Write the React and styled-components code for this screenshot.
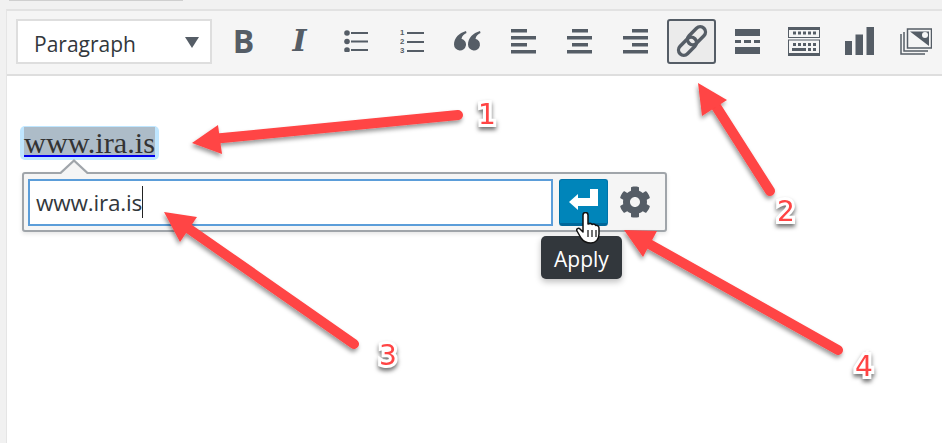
import styled, { createGlobalStyle } from 'styled-components'
import { FaCog } from 'react-icons/fa'

const GlobalStyle = createGlobalStyle`
  html, body {
    margin: 0;
    padding: 0;
    background: #f1f1f1;
    overflow: hidden;
  }
`

const Page = styled.div`
  position: relative;
  box-sizing: border-box;
  width: 942px;
  height: 443px;
  overflow: hidden;
  padding-left: 6px;
  background: #f1f1f1;
  font-family: "Open Sans", sans-serif;
`

const TabEdge = styled.div`
  width: 174px;
  height: 1px;
  margin: 0 0 8px 3px;
  background: #cfcfcf;
`

const Editor = styled.div`
  height: 434px;
  border-left: 1px solid #e5e5e5;
  border-top: 2px solid #e2e2e2;
  background: #fff;
`

const Toolbar = styled.div`
  box-sizing: border-box;
  height: 65px;
  display: flex;
  align-items: center;
  gap: 7px;
  padding: 0 0 3px 9px;
  background: #f5f5f5;
  border-bottom: 2px solid #dedede;
`

const FormatSelect = styled.div`
  box-sizing: border-box;
  width: 196px;
  height: 45px;
  display: flex;
  align-items: center;
  justify-content: space-between;
  padding: 0 11px 0 16px;
  background: #fff;
  border: 2px solid #dedede;
  color: #32373c;
  font-size: 21px;
`

const FormatLabel = styled.span`
  padding-top: 5px;
`

const Caret = styled.span`
  margin-top: 3px;
  width: 0;
  height: 0;
  border-left: 7px solid transparent;
  border-right: 7px solid transparent;
  border-top: 11px solid #555d66;
`

const ToolButton = styled.div`
  box-sizing: border-box;
  flex: none;
  width: 49px;
  height: 45px;
  display: flex;
  align-items: center;
  justify-content: center;
  border-radius: 3px;
  color: #555d66;
  border: 2px solid ${p => (p.$active ? '#555d66' : 'transparent')};
  background: ${p => (p.$active ? '#ebebeb' : 'transparent')};
`

const BoldGlyph = styled.span`
  font-family: "Open Sans", sans-serif;
  font-weight: 700;
  font-size: 32px;
  line-height: 1;
`

const ItalicGlyph = styled.span`
  font-family: "DejaVu Serif", serif;
  font-weight: 700;
  font-style: italic;
  font-size: 30px;
  line-height: 1;
`

const Content = styled.div`
  padding: 50px 0 0 13px;
`

const SelectionBox = styled.span`
  display: inline-block;
  padding: 1px 4px 3px;
  border-radius: 5px;
  background: #bfe6ff;
`

const LinkText = styled.span`
  display: block;
  height: 28px;
  line-height: 32px;
  background: #adbcc8;
  border-bottom: 2px solid #0000ee;
  color: #333;
  font-family: "Liberation Serif", serif;
  font-size: 30.3px;
`

const LinkPopup = styled.div`
  position: absolute;
  left: 22px;
  top: 172px;
  box-sizing: border-box;
  width: 645px;
  height: 60px;
  display: flex;
  align-items: center;
  gap: 6px;
  padding: 0 4px;
  background: #f5f5f5;
  border: 2px solid #a0a5aa;
  border-radius: 3px;
  box-shadow: 0 2px 4px rgba(0, 0, 0, 0.1);

  &::before,
  &::after {
    content: '';
    position: absolute;
    width: 0;
    height: 0;
    border-left: 14px solid transparent;
    border-right: 14px solid transparent;
    border-bottom: 13px solid #a0a5aa;
    left: 36px;
    top: -15px;
  }

  &::after {
    border-bottom-color: #f5f5f5;
    top: -12px;
  }
`

const UrlField = styled.div`
  box-sizing: border-box;
  width: 525px;
  height: 47px;
  display: flex;
  align-items: center;
  padding-left: 6px;
  background: #fff;
  border: 2px solid #5b9dd9;
  color: #32373c;
  font-size: 22.5px;
  letter-spacing: -0.2px;
`

const TextCaret = styled.span`
  width: 1px;
  height: 32px;
  background: #222;
`

const ApplyButton = styled.div`
  box-sizing: border-box;
  width: 49px;
  height: 47px;
  display: flex;
  align-items: center;
  justify-content: center;
  padding-bottom: 2px;
  background: #0085ba;
  border: 1px solid #0073aa;
  border-bottom: 3px solid #006799;
  border-radius: 3px;
`

const GearButton = styled.div`
  flex: 1;
  display: flex;
  justify-content: center;
  padding-right: 5px;
  color: #555d66;
  font-size: 32px;
  line-height: 0;
`

const Tooltip = styled.div`
  position: absolute;
  left: 541px;
  top: 236px;
  box-sizing: border-box;
  width: 81px;
  height: 43px;
  padding-top: 3px;
  display: flex;
  align-items: center;
  justify-content: center;
  background: #32373c;
  border-radius: 5px;
  box-shadow: 0 3px 6px rgba(0, 0, 0, 0.25);
  color: #fff;
  font-size: 21px;
`

const HandCursor = styled.svg`
  position: absolute;
  left: 576px;
  top: 212px;
`

const Overlay = styled.svg`
  position: absolute;
  left: 0;
  top: 0;
  pointer-events: none;
`

const Callout = styled.span`
  position: absolute;
  left: ${p => p.$x}px;
  top: ${p => p.$y}px;
  width: 30px;
  margin-left: -15px;
  text-align: center;
  color: #ff4444;
  font-family: "DejaVu Sans", sans-serif;
  font-size: 28px;
  line-height: 40px;
  -webkit-text-stroke: 6px #fff;
  paint-order: stroke fill;
  filter: drop-shadow(0 3px 2px rgba(0, 0, 0, 0.55));
`

const arrows = [
  { head: '192,143 218,125 222,154', from: [458, 115], to: [212, 139] },
  { head: '698,83 727,100 702,116', from: [770, 191], to: [712, 100] },
  { head: '164,212 197,217 180,242', from: [354, 344], to: [182, 224] },
  { head: '624,230 657,231 643,257', from: [838, 350], to: [642, 240] },
]

const callouts = [
  { label: '1', x: 487, y: 95 },
  { label: '2', x: 786, y: 192 },
  { label: '3', x: 388, y: 336 },
  { label: '4', x: 864, y: 347 },
]

function Icon({ w, h, children }) {
  return (
    <svg width={w} height={h} viewBox={`0 0 ${w} ${h}`} fill="currentColor">
      {children}
    </svg>
  )
}

function ListIcon() {
  return (
    <Icon w={24} h={22}>
      <circle cx="3" cy="3" r="2.8" />
      <circle cx="3" cy="11.5" r="2.8" />
      <circle cx="3" cy="20" r="2.8" />
      <rect x="7" y="2" width="17" height="2" />
      <rect x="7" y="10.5" width="17" height="2" />
      <rect x="7" y="19" width="17" height="2" />
    </Icon>
  )
}

function NumberedIcon() {
  return (
    <Icon w={24} h={27}>
      <text x="0" y="7" fontSize="7.8" fontWeight="700" fontFamily="Liberation Sans">1</text>
      <text x="0" y="16" fontSize="7.8" fontWeight="700" fontFamily="Liberation Sans">2</text>
      <text x="0" y="25" fontSize="7.8" fontWeight="700" fontFamily="Liberation Sans">3</text>
      <rect x="7" y="4" width="17" height="2" />
      <rect x="7" y="13" width="17" height="2" />
      <rect x="7" y="22" width="17" height="2" />
    </Icon>
  )
}

function QuoteIcon() {
  return (
    <Icon w={27} h={20}>
      <path d="M12 0C5 2 0 7 0 13.500a6 6 0 1 0 7.500-5.800C8 5 10 3 12.500 2Z" />
      <path d="M26 0C19 2 14 7 14 13.500a6 6 0 1 0 7.500-5.800C22 5 24 3 26.500 2Z" />
    </Icon>
  )
}

function AlignIcon({ align }) {
  const short = { left: 0, center: 5, right: 9 }[align]
  return (
    <Icon w={25} h={25}>
      <rect x={short} y="0" width="16" height="3.500" />
      <rect x="0" y="7" width="25" height="3.500" />
      <rect x={short} y="14" width="16" height="3.500" />
      <rect x="0" y="21" width="25" height="3.500" />
    </Icon>
  )
}

function ChainIcon() {
  return (
    <svg width="32" height="32" viewBox="0 0 32 32" fill="none" stroke="currentColor" strokeWidth="3.400">
      <rect x="10" y="5.500" width="21" height="10.500" rx="5.250" transform="rotate(-45 20.500 10.750)" />
      <rect x="1" y="16" width="21" height="10.500" rx="5.250" transform="rotate(-45 11.500 21.250)" />
    </svg>
  )
}

function MoreIcon() {
  return (
    <Icon w={25} h={25}>
      <rect x="0" y="0" width="25" height="7" />
      <rect x="0" y="11" width="6" height="3" />
      <rect x="9" y="11" width="7" height="3" />
      <rect x="19" y="11" width="6" height="3" />
      <rect x="0" y="18" width="25" height="7" />
    </Icon>
  )
}

function KitchenSinkIcon() {
  const keys = [6, 11, 16, 21, 26]
  return (
    <svg width="32" height="29" viewBox="0 0 32 29" fill="currentColor">
      <rect x="0.500" y="0.500" width="31" height="10" fill="none" stroke="currentColor" />
      <rect x="0.500" y="13" width="31" height="15.500" fill="none" stroke="currentColor" />
      <rect x="1" y="1" width="30" height="2" />
      <rect x="1" y="26" width="30" height="2" />
      {keys.map(x => <rect key={x} x={x - 1} y="4.500" width="3" height="3" />)}
      {keys.map(x => <rect key={x} x={x - 1} y="16" width="3" height="3" />)}
      <rect x="4" y="21" width="14" height="3" />
      <rect x="20" y="21" width="3" height="3" />
      <rect x="25" y="21" width="3" height="3" />
    </svg>
  )
}

function ChartIcon() {
  return (
    <Icon w={29} h={28}>
      <rect x="0" y="14" width="7" height="14" />
      <rect x="10.500" y="7.500" width="7.500" height="20.500" />
      <rect x="21.500" y="0" width="7.500" height="28" />
    </Icon>
  )
}

function GalleryIcon() {
  return (
    <svg width="32" height="27" viewBox="0 0 32 27" fill="none" stroke="currentColor" strokeWidth="1.500">
      <path d="M1 6v20h24" />
      <path d="M4 4v19h24" />
      <rect x="7.500" y="1" width="24" height="19" fill="#f5f5f5" />
      <path d="M10 3.500h19v14.500Z" fill="currentColor" stroke="none" />
      <circle cx="25" cy="7" r="3" fill="#f5f5f5" stroke="none" />
    </svg>
  )
}

function ReturnIcon() {
  return (
    <svg width="30" height="22" viewBox="0 0 30 22" fill="#fff">
      <path d="M0 13 9 5v4h12V0h8v17H9v4Z" />
    </svg>
  )
}

function Hand() {
  return (
    <HandCursor width="26" height="33" viewBox="0 0 26 33">
      <path
        d="M7 3a2.500 2.500 0 0 1 5 0v9c2-1 3.500-.5 4 .5 1.500-.8 3.200-.3 3.800 1 1.500-.5 3.200.5 3.200 2.500v6c0 5-3 9-8 9s-8-2-10-5l-4-7c-1.200-2 1.500-3.500 3-2l3 3Z"
        fill="#fff"
        stroke="#111"
        strokeWidth="1.500"
        strokeLinejoin="round"
      />
      <path d="M12 18v7M16 18v7M20 18v7" stroke="#111" strokeWidth="1.200" />
    </HandCursor>
  )
}

function App() {
  return (
    <Page>
      <GlobalStyle />
      <TabEdge />
      <Editor>
        <Toolbar>
          <FormatSelect>
            <FormatLabel>Paragraph</FormatLabel>
            <Caret />
          </FormatSelect>
          <ToolButton><BoldGlyph>B</BoldGlyph></ToolButton>
          <ToolButton><ItalicGlyph>I</ItalicGlyph></ToolButton>
          <ToolButton><ListIcon /></ToolButton>
          <ToolButton><NumberedIcon /></ToolButton>
          <ToolButton><QuoteIcon /></ToolButton>
          <ToolButton><AlignIcon align="left" /></ToolButton>
          <ToolButton><AlignIcon align="center" /></ToolButton>
          <ToolButton><AlignIcon align="right" /></ToolButton>
          <ToolButton $active><ChainIcon /></ToolButton>
          <ToolButton><MoreIcon /></ToolButton>
          <ToolButton><KitchenSinkIcon /></ToolButton>
          <ToolButton><ChartIcon /></ToolButton>
          <ToolButton><GalleryIcon /></ToolButton>
        </Toolbar>
        <Content>
          <SelectionBox>
            <LinkText>www.ira.is</LinkText>
          </SelectionBox>
        </Content>
      </Editor>

      <LinkPopup>
        <UrlField>
          www.ira.is
          <TextCaret />
        </UrlField>
        <ApplyButton><ReturnIcon /></ApplyButton>
        <GearButton><FaCog /></GearButton>
      </LinkPopup>
      <Tooltip>Apply</Tooltip>
      <Hand />

      <Overlay width="942" height="443" viewBox="0 0 942 443">
        <defs>
          <filter id="arrow-shadow" x="-20%" y="-20%" width="140%" height="140%">
            <feDropShadow dx="-1" dy="3" stdDeviation="2" floodColor="#000" floodOpacity="0.4" />
          </filter>
        </defs>
        {arrows.map(a => (
          <g key={a.head} filter="url(#arrow-shadow)">
            <line
              x1={a.from[0]}
              y1={a.from[1]}
              x2={a.to[0]}
              y2={a.to[1]}
              stroke="#ff4444"
              strokeWidth="10"
              strokeLinecap="round"
            />
            <polygon points={a.head} fill="#ff4444" />
          </g>
        ))}
      </Overlay>

      {callouts.map(c => (
        <Callout key={c.label} $x={c.x} $y={c.y}>{c.label}</Callout>
      ))}
    </Page>
  )
}

export default App
